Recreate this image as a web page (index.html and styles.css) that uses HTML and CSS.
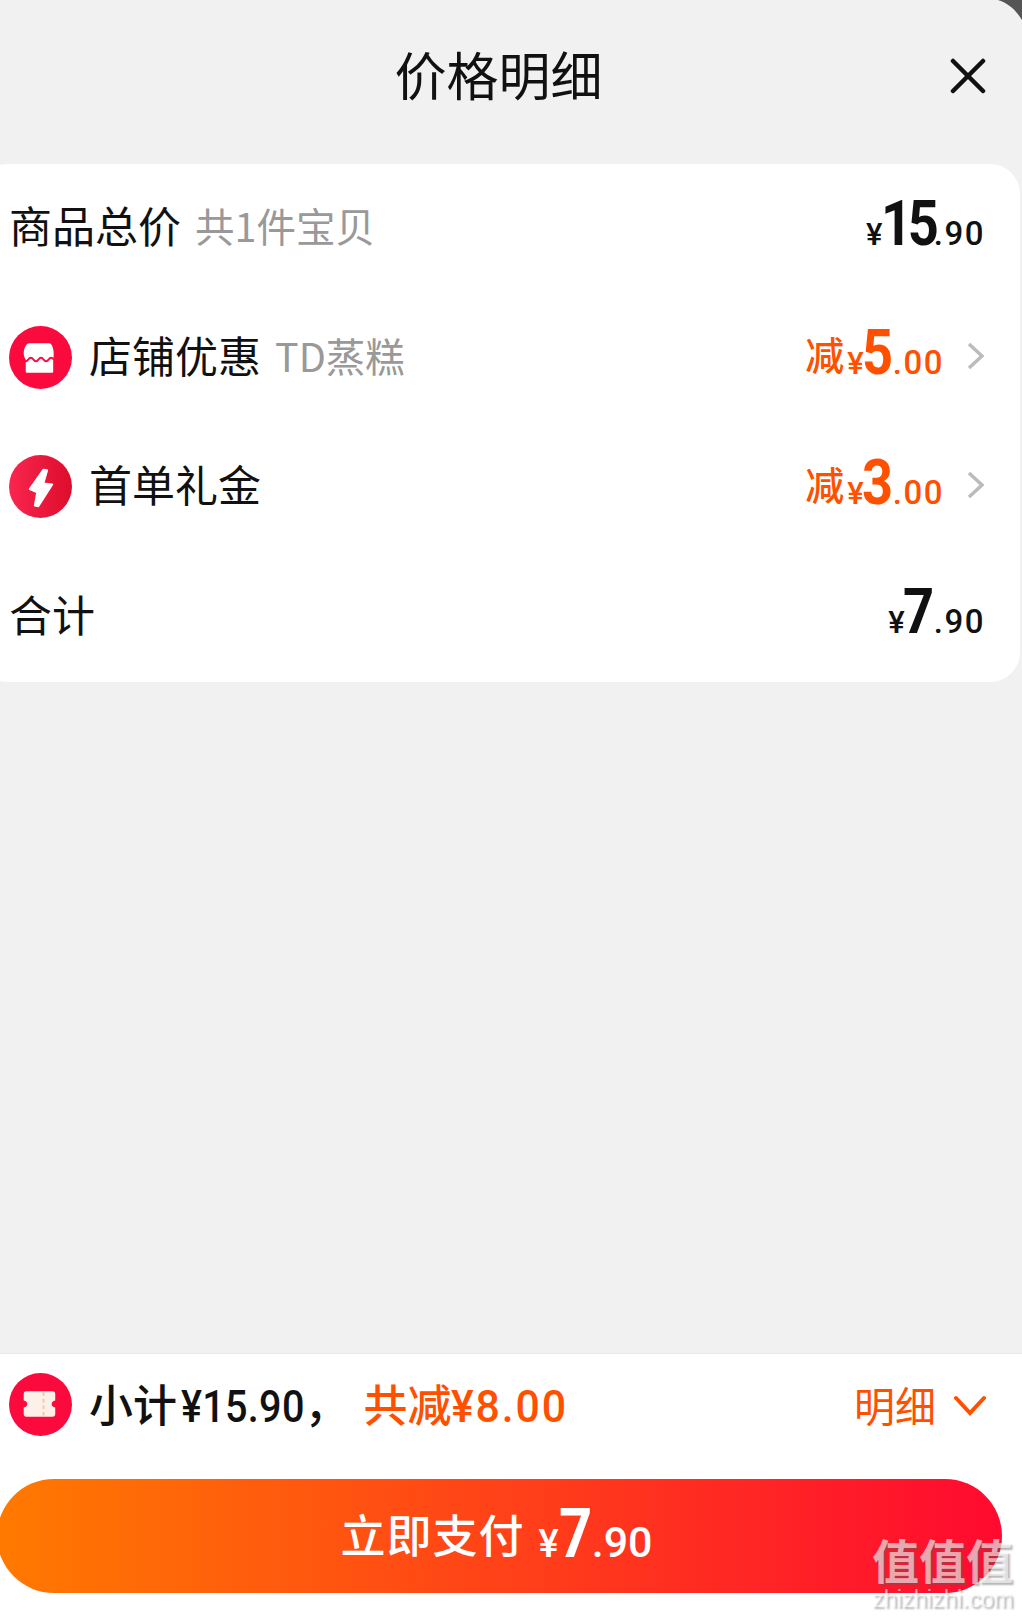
FILE: index.html
```html
<!DOCTYPE html>
<html lang="zh-CN">
<head>
  <meta charset="utf-8">
  <title>价格明细</title>
  <link rel="stylesheet" href="styles.css">
</head>
<body>
  <div class="sheet">
    <div class="header">
      <h1>价格明细</h1>
      <svg class="close" width="36" height="36" viewBox="0 0 36 36"><path d="M3 3L33 33M33 3L3 33"/></svg>
    </div>

    <div class="card">
      <div class="row">
        <span class="label">商品总价</span>
        <span class="sub">共1件宝贝</span>
        <div class="price">
          <span class="cur">¥</span><span class="big two">15</span><span class="small">.90</span>
        </div>
      </div>
      <div class="row">
        <svg class="badge" width="63" height="63" viewBox="0 0 62 62">
          <circle cx="31" cy="31" r="31" fill="#fb0a3e"/>
          <path fill="#fff" d="M20 17H39.500C42 17 44 22 44 27C44 30 43.500 33 43.500 33V44.500C43.500 45.500 43 46 42 46H18C17 46 16.500 45.500 16.500 44.500V33C16.500 33 14.500 30 14.500 27C14.500 22 17 17 20 17Z"/>
          <path fill="none" stroke="#fb0a3e" stroke-width="2" d="M14 33Q16.500 36.500 19 33T24 33T29 33T34 33T39 33T44 33"/>
        </svg>
        <span class="label">店铺优惠</span>
        <span class="sub">TD蒸糕</span>
        <div class="price orange">
          <span class="off">减</span><span class="cur">¥</span><span class="big">5</span><span class="small">.00</span>
        </div>
        <svg class="arrow" width="17" height="28" viewBox="0 0 17 28"><path d="M2 2L15 14L2 26"/></svg>
      </div>
      <div class="row">
        <svg class="badge" width="63" height="63" viewBox="0 0 62 62">
          <defs>
            <linearGradient id="boltBg" x1="0" y1="0" x2="1" y2="0">
              <stop offset="0" stop-color="#f9264f"/>
              <stop offset="1" stop-color="#dd0d2c"/>
            </linearGradient>
          </defs>
          <circle cx="31" cy="31" r="31" fill="url(#boltBg)"/>
          <path fill="#fff" stroke="#fff" stroke-width="2" stroke-linejoin="round" d="M33.800 14.500L37.500 15L33.800 28L42.500 29L28.800 50.500L25.500 49.800L27.800 36.700L20.500 33.500Z"/>
        </svg>
        <span class="label">首单礼金</span>
        <div class="price orange">
          <span class="off">减</span><span class="cur">¥</span><span class="big">3</span><span class="small">.00</span>
        </div>
        <svg class="arrow" width="17" height="28" viewBox="0 0 17 28"><path d="M2 2L15 14L2 26"/></svg>
      </div>
      <div class="row">
        <span class="label">合计</span>
        <div class="price">
          <span class="cur">¥</span><span class="big">7</span><span class="small">.90</span>
        </div>
      </div>
    </div>

    <div class="footer">
      <div class="summary">
        <svg class="badge" width="63" height="63" viewBox="0 0 62 62">
          <circle cx="31" cy="31" r="31" fill="#fb0a3e"/>
          <path fill="#fdf0e8" d="M17 18H43C44.500 18 45.500 19 45.500 20.500V27C43 27.500 42 29 42 30.500C42 32 43 33.500 45.500 34V40.500C45.500 42 44.500 43 43 43H17C15.500 43 14.500 42 14.500 40.500V34C17 33.500 18 32 18 30.500C18 29 17 27.500 14.500 27V20.500C14.500 19 15.500 18 17 18Z"/>
          <path fill="none" stroke="#f6c6ae" stroke-width="2" stroke-dasharray="3.500 3" d="M34 19V42"/>
        </svg>
        <span class="total">小计<span class="num">¥15.90</span>，</span>
        <span class="saved">共减<span class="num">¥8.00</span></span>
        <div class="detail">
          <span>明细</span>
          <svg class="down" width="32" height="22" viewBox="0 0 32 22"><path d="M2 3L16 18L30 3"/></svg>
        </div>
      </div>
      <div class="pay">
        <span class="pay-text">立即支付</span>
        <span class="pay-cur">¥</span><span class="pay-big">7</span><span class="pay-small">.90</span>
      </div>
    </div>
  </div>

  <!-- dark page behind the sheet, showing at the top right -->
  <svg class="corner" width="24" height="20" viewBox="0 0 24 20"><path d="M0 0H24V20C18 10 10 3 0 0Z"/></svg>

  <!-- site watermark over the corner of the screenshot -->
  <div class="mark">
    <div class="mark-cn">值值值</div>
    <div class="mark-en">zhizhizhi.com</div>
  </div>
</body>
</html>
```

FILE: styles.css
```css
/* Basic reset and page frame */
html, body {
  margin: 0;
  height: 1616px;
  overflow: hidden;
}
body {
  position: relative;
  width: 1022px;
  background-color: #f1f1f1;
  font-family: "Noto Sans CJK SC", "Noto Sans", sans-serif;
  color: #111;
}
.sheet {
  display: flex;
  flex-direction: column;
  width: 1044px;
  height: 1616px;
  margin-left: -22px;
}
.corner {
  position: absolute;
  top: 0;
  right: 0;
}
.corner path {
  fill: #555;
}

/* Header */
.header {
  display: flex;
  align-items: center;
  justify-content: center;
  position: relative;
  height: 148px;
  padding: 0 3px 16px 0;
}
h1 {
  margin: 0;
  font-size: 52px;
  font-weight: 400;
  line-height: 1;
}
.close {
  position: absolute;
  right: 36px;
  top: 58px;
}
.close path {
  fill: none;
  stroke: #111;
  stroke-width: 4.5;
  stroke-linecap: round;
}

/* Price card */
.card {
  width: 1042px;
  padding: 0 36px 0 31px;
  box-sizing: border-box;
  background-color: #fff;
  border-radius: 30px;
}
.row {
  display: flex;
  align-items: center;
  height: 129.500px;
}
.badge {
  flex: none;
  margin: 0 17px 2px 0;
}
.label {
  padding-bottom: 8px;
  font-size: 43px;
  line-height: 1;
}
.sub {
  margin-left: 14px;
  padding-bottom: 8px;
  font-size: 39.500px;
  line-height: 1;
  color: #999;
}
.price {
  display: flex;
  align-items: baseline;
  margin-left: auto;
  padding-bottom: 11px;
  font-family: Roboto, sans-serif;
  line-height: 1;
}
.orange {
  color: #ff5000;
}
.off {
  margin-right: 3px;
  font-family: "Noto Sans CJK SC", sans-serif;
  font-size: 39px;
  font-weight: 500;
  transform: translateY(-4px);
}
.cur {
  font-size: 31px;
  font-weight: 500;
  margin-right: -2px;
}
/* digits are narrower than Roboto, squeeze them */
.big {
  display: inline-block;
  font-size: 63px;
  font-weight: 700;
  transform: scaleX(0.86);
  transform-origin: left;
  margin-right: -5px;
}
.two {
  letter-spacing: -5px;
  margin-right: -9px;
}
.small {
  font-size: 33px;
  font-weight: 500;
  letter-spacing: 1.500px;
  margin-right: -1px;
}
.arrow {
  margin: 0 0 5px 24px;
}
.arrow path {
  fill: none;
  stroke: #bbb;
  stroke-width: 3.5;
}

/* Bottom bar */
.footer {
  margin-top: auto;
  height: 262px;
  background-color: #fff;
  border-top: 1px solid #e8e8e8;
}
.summary {
  display: flex;
  align-items: center;
  height: 102px;
  padding: 0 36px 0 31px;
}
.total, .saved {
  font-size: 44px;
  font-weight: 500;
  line-height: 1;
}
.saved {
  margin-left: 15px;
  color: #ff5000;
}
.num {
  display: inline-block;
  font-family: Roboto, sans-serif;
  font-size: 45px;
  font-weight: 500;
  letter-spacing: 0.300px;
  transform: scaleX(0.88);
  transform-origin: left;
  margin: 0 -0.380em 0 4px;
}
.saved .num {
  letter-spacing: 2px;
  transform: scaleX(0.95);
  margin: 0 -6px 0 0;
}
.detail {
  display: flex;
  align-items: center;
  margin-left: auto;
  font-size: 41px;
  line-height: 1;
  color: #ff5000;
}
.detail span {
  padding-bottom: 2px;
}
.down {
  margin: 2px 0 0 18px;
}
.down path {
  fill: none;
  stroke: #ff5000;
  stroke-width: 4;
  stroke-linecap: round;
}
.pay {
  display: flex;
  align-items: baseline;
  justify-content: center;
  height: 114px;
  line-height: 110px;
  margin: 23px 20px 0 19px;
  padding-right: 6px;
  box-sizing: border-box;
  border-radius: 57px;
  background: linear-gradient(90deg, #ff7a00, #ff0a30);
  color: #fff;
  font-family: Roboto, sans-serif;
  font-weight: 700;
}
.pay-text {
  font-family: "Noto Sans CJK SC", sans-serif;
  font-size: 45px;
  font-weight: 500;
  letter-spacing: 1px;
  transform: translateY(-4px);
}
.pay-cur {
  margin-left: 14px;
  font-size: 38px;
  font-weight: 500;
}
.pay-big {
  display: inline-block;
  font-size: 68px;
  transform: scaleX(0.85);
  transform-origin: left;
  margin-right: -6px;
}
.pay-small {
  font-size: 43px;
  font-weight: 500;
}

/* Watermark */
.mark {
  position: absolute;
  left: 872px;
  top: 1534px;
  width: 145px;
  color: rgba(255, 255, 255, 0.62);
  text-shadow: 2px 2px 2px rgba(90, 90, 90, 0.45);
}
.mark-cn {
  font-size: 47px;
  font-weight: 700;
  line-height: 50px;
}
.mark-en {
  margin-top: 4px;
  font-family: "Liberation Sans", sans-serif;
  font-size: 23.500px;
  line-height: 22px;
}
```
